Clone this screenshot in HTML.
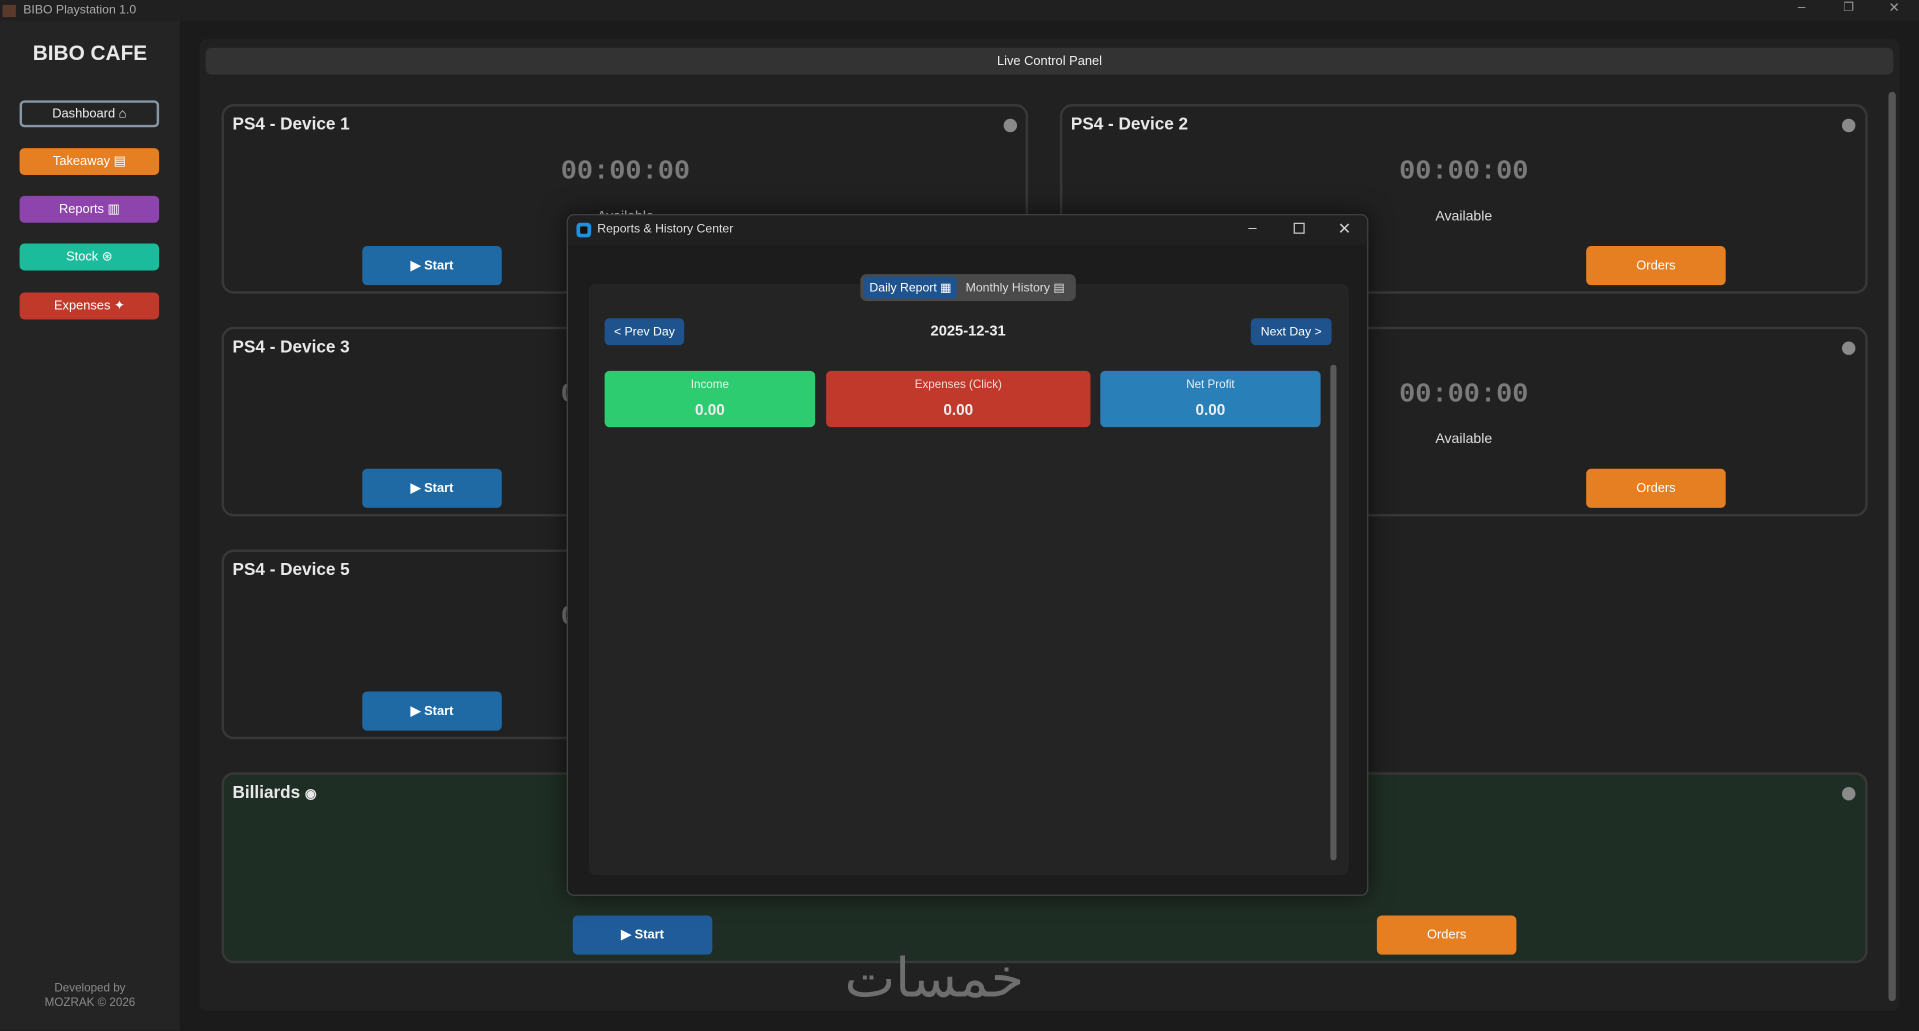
<!DOCTYPE html>
<html><head><meta charset="utf-8"><style>
*{box-sizing:border-box;margin:0;padding:0}
html,body{width:1919px;height:1030px;overflow:hidden;background:#1b1b1b;font-family:"Liberation Sans",sans-serif;color:#eee}
#w{position:absolute;left:0;top:0;width:1568px;height:842px;transform:scale(1.2239);transform-origin:0 0;background:#1b1b1b}
.a{position:absolute}
.btn{position:absolute;display:flex;align-items:center;justify-content:center;font-size:10.5px;color:#fff;border-radius:4px}
.card{position:absolute;border:2px solid #383838;border-radius:10px;background:#212121}
.ct{position:absolute;left:7px;top:6px;font-weight:bold;font-size:14px;color:#e8e8e8}
.dot{position:absolute;width:11px;height:11px;border-radius:50%;background:#8a8a8a}
.tm{position:absolute;width:200px;text-align:center;font-family:"Liberation Mono",monospace;font-weight:bold;font-size:22px;color:#7a7a7a}
.av{position:absolute;width:200px;text-align:center;font-size:11.5px;color:#ddd}
</style></head><body><div id="w">
<div class="a" style="left:0;top:0;width:1568px;height:17px;background:#202020"></div>
<div class="a" style="left:2px;top:4px;width:11px;height:10px;background:#5a3a2a"></div>
<div class="a" style="left:19px;top:3px;font-size:10px;color:#aaa">BIBO Playstation 1.0</div>
<div class="a" style="left:1469px;top:0;font-size:11px;color:#999">–</div>
<div class="a" style="left:1506px;top:1px;font-size:10px;color:#999">❐</div>
<div class="a" style="left:1543px;top:0;font-size:11px;color:#999">✕</div>
<div class="a" style="left:0;top:17px;width:147px;height:825px;background:#242424"></div>
<div class="a" style="left:0;top:34px;width:147px;text-align:center;font-weight:bold;font-size:17px;color:#e8e8e8">BIBO CAFE</div>
<div class="btn" style="left:16px;top:82px;width:114px;height:22px;border:2px solid #8796a5;color:#eee">Dashboard ⌂</div>
<div class="btn" style="left:16px;top:121px;width:114px;height:22px;background:#e67e22">Takeaway ▤</div>
<div class="btn" style="left:16px;top:160px;width:114px;height:22px;background:#8e44ad">Reports ▥</div>
<div class="btn" style="left:16px;top:199px;width:114px;height:22px;background:#1abc9c">Stock ⊛</div>
<div class="btn" style="left:16px;top:239px;width:114px;height:22px;background:#c0392b">Expenses ✦</div>
<div class="a" style="left:0;top:802px;width:147px;text-align:center;font-size:9.5px;color:#8a8a8a;line-height:12px">Developed by<br>MOZRAK © 2026</div>
<div class="a" style="left:163px;top:32px;width:1389px;height:794px;background:#212121;border-radius:6px"></div>
<div class="a" style="left:168px;top:39px;width:1379px;height:22px;background:#333;border-radius:5px;font-size:10.5px;text-align:center;line-height:22px;color:#eee">Live Control Panel</div>
<div class="a" style="left:1543px;top:75px;width:6px;height:743px;background:#555;border-radius:3px"></div>

<div class="card" style="left:181px;top:85px;width:659px;height:155px"><div class="ct">PS4 - Device 1</div><div class="dot" style="left:637px;top:10px"></div><div class="tm" style="left:228px;top:41px">00:00:00</div><div class="av" style="left:228px;top:84px">Available</div><div class="btn" style="left:113px;top:114px;width:114px;height:32px;background:#1f6aa5;font-weight:bold">▶ Start</div></div>
<div class="card" style="left:866px;top:85px;width:660px;height:155px"><div class="ct">PS4 - Device 2</div><div class="dot" style="left:637px;top:10px"></div><div class="tm" style="left:228px;top:41px">00:00:00</div><div class="av" style="left:228px;top:84px">Available</div><div class="btn" style="left:428px;top:114px;width:114px;height:32px;background:#e67e22">Orders</div></div>
<div class="card" style="left:181px;top:267px;width:659px;height:155px"><div class="ct">PS4 - Device 3</div><div class="tm" style="left:228px;top:41px">00:00:00</div><div class="btn" style="left:113px;top:114px;width:114px;height:32px;background:#1f6aa5;font-weight:bold">▶ Start</div></div>
<div class="card" style="left:866px;top:267px;width:660px;height:155px"><div class="ct">PS4 - Device 4</div><div class="dot" style="left:637px;top:10px"></div><div class="tm" style="left:228px;top:41px">00:00:00</div><div class="av" style="left:228px;top:84px">Available</div><div class="btn" style="left:428px;top:114px;width:114px;height:32px;background:#e67e22">Orders</div></div>
<div class="card" style="left:181px;top:449px;width:659px;height:155px"><div class="ct">PS4 - Device 5</div><div class="tm" style="left:228px;top:41px">00:00:00</div><div class="btn" style="left:113px;top:114px;width:114px;height:32px;background:#1f6aa5;font-weight:bold">▶ Start</div></div>
<div class="card" style="left:181px;top:631px;width:1345px;height:156px;background:#1f2e24"><div class="ct">Billiards <span style="font-size:11px">◉</span></div><div class="dot" style="left:1322px;top:10px"></div><div class="btn" style="left:285px;top:115px;width:114px;height:32px;background:#1f5c99;font-weight:bold">▶ Start</div><div class="btn" style="left:942px;top:115px;width:114px;height:32px;background:#e67e22">Orders</div></div>
<div class="a" style="left:690px;top:774px;font-family:'DejaVu Sans',sans-serif;font-size:44px;color:#6e6e6e">خمسات</div>

<div class="a" style="left:463px;top:175px;width:655px;height:557px;background:#1c1c1c;border:1px solid #444;border-radius:6px;box-shadow:0 0 20px rgba(0,0,0,.6)">
<div class="a" style="left:0;top:0;width:653px;height:24px;background:#202020;border-radius:6px 6px 0 0"></div>
<div class="a" style="left:7px;top:6px;width:12px;height:12px;border-radius:3px;background:#1e90e0"><div style="margin:3px;width:6px;height:6px;background:#111;border-radius:1px"></div></div>
<div class="a" style="left:24px;top:6px;font-size:10px;color:#ddd">Reports &amp; History Center</div>
<div class="a" style="left:556px;top:3px;font-size:12px;color:#ccc">–</div>
<div class="a" style="left:593px;top:6px;width:9px;height:9px;border:1px solid #ccc"></div>
<div class="a" style="left:629px;top:3px;font-size:13px;color:#ccc">✕</div>
<div class="a" style="left:17px;top:56px;width:621px;height:483px;background:#242424;border-radius:6px"></div>
<div class="a" style="left:239px;top:48px;width:176px;height:22px;background:#4a4a4a;border-radius:5px"></div>
<div class="btn" style="left:242px;top:50px;width:76px;height:18px;background:#1f538d;font-size:10px;border-radius:3px">Daily Report ▦</div>
<div class="a" style="left:325px;top:54px;font-size:10px;color:#ddd">Monthly History ▤</div>
<div class="btn" style="left:30px;top:84px;width:65px;height:22px;background:#1f538d;font-size:10px">&lt; Prev Day</div>
<div class="a" style="left:227px;top:87px;width:200px;text-align:center;font-weight:bold;font-size:12px;color:#eee">2025-12-31</div>
<div class="btn" style="left:558px;top:84px;width:66px;height:22px;background:#1f538d;font-size:10px">Next Day &gt;</div>
<div class="a" style="left:623px;top:122px;width:5px;height:405px;background:#5a5a5a;border-radius:3px"></div>
<div class="a" style="left:30px;top:127px;width:172px;height:46px;background:#2ecc71;border-radius:4px;text-align:center"><div style="font-size:9.5px;margin-top:6px;color:#e6f5ea">Income</div><div style="font-weight:bold;font-size:12.5px;margin-top:8px">0.00</div></div>
<div class="a" style="left:211px;top:127px;width:216px;height:46px;background:#c0392b;border-radius:4px;text-align:center"><div style="font-size:9.5px;margin-top:6px;color:#f1dada">Expenses (Click)</div><div style="font-weight:bold;font-size:12.5px;margin-top:8px">0.00</div></div>
<div class="a" style="left:435px;top:127px;width:180px;height:46px;background:#2980b9;border-radius:4px;text-align:center"><div style="font-size:9.5px;margin-top:6px;color:#e3eef7">Net Profit</div><div style="font-weight:bold;font-size:12.5px;margin-top:8px">0.00</div></div>
</div>
</div></body></html>
